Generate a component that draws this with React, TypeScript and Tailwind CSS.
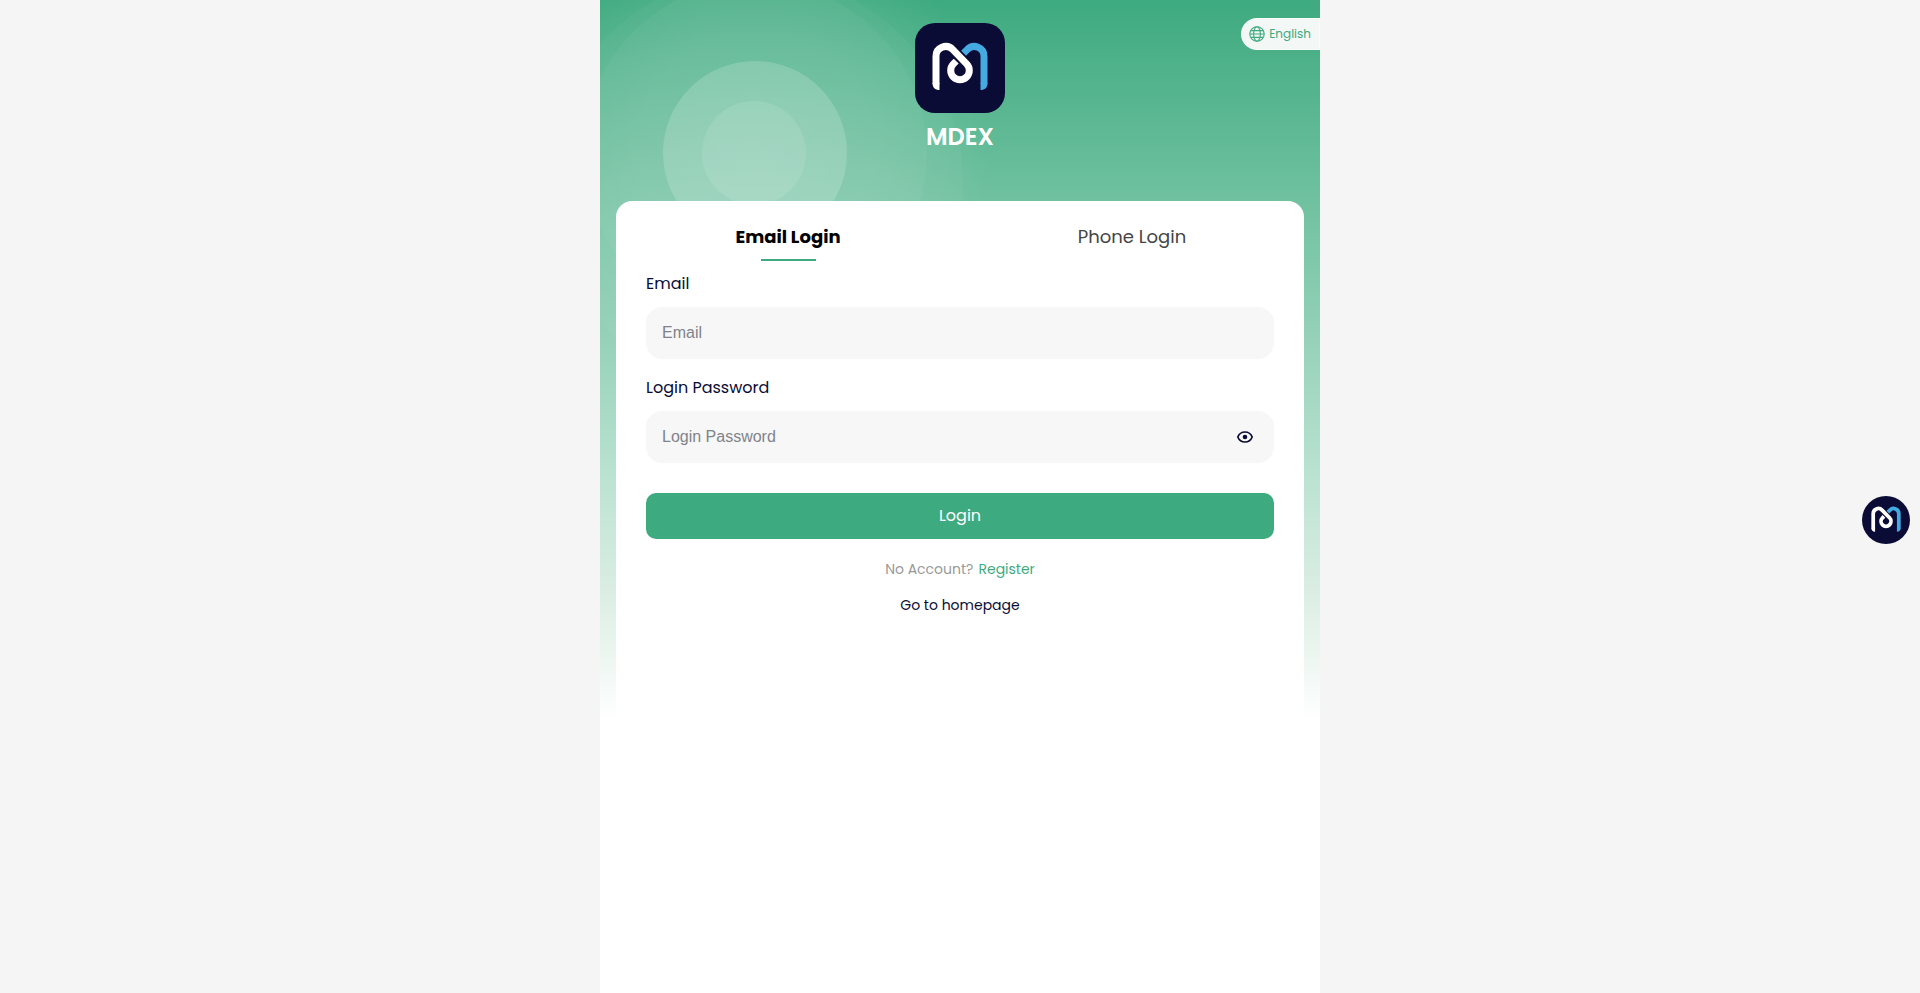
import { useState } from "react";

const tabs = [
  { id: "email", label: "Email Login", field: "Email" },
  { id: "phone", label: "Phone Login", field: "Phone" },
];

function Logo({ className }: { className: string }) {
  return (
    <svg viewBox="0 0 90 90" fill="none" className={className} aria-hidden="true">
      <rect width="90" height="90" fill="#0a0c35" />
      <path d="M48.6 30.2L52.4 26.4A9.7 9.7 0 0 1 69 33.3V61" stroke="#45a9e2" strokeWidth="7" />
      <path d="M65.5 60H72.5C72.5 64.5 70 67.1 65.5 67.1Z" fill="#45a9e2" />
      <path d="M38 26.9L50 38.9" stroke="#0a0c35" strokeWidth="8.6" />
      <path
        d="M21 61V33.3A9.7 9.7 0 0 1 37.6 26.4L51.6 40.9A9.3 9.3 0 1 1 38.4 40.9L41.2 38.1"
        stroke="#fff"
        strokeWidth="7"
      />
      <path d="M17.5 60H24.5V67.1C20 67.1 17.5 64.5 17.5 60Z" fill="#fff" />
    </svg>
  );
}

function GlobeIcon() {
  return (
    <svg width="16" height="16" viewBox="0 0 16 16" fill="none" stroke="currentColor" strokeWidth="1.1" aria-hidden="true">
      <circle cx="8" cy="8" r="7.2" />
      <ellipse cx="8" cy="8" rx="3.4" ry="7.2" />
      <path d="M.8 8H15.2M2 4.6H14M2 11.4H14" />
    </svg>
  );
}

function EyeIcon() {
  return (
    <svg width="18" height="18" viewBox="0 0 18 18" fill="none" aria-hidden="true">
      <path
        d="M1.8 9C3.2 5.6 5.8 4 9 4S14.8 5.6 16.2 9C14.8 12.4 12.2 14 9 14S3.2 12.4 1.8 9Z"
        stroke="currentColor"
        strokeWidth="1.7"
      />
      <circle cx="9" cy="9" r="2.3" fill="currentColor" />
    </svg>
  );
}

// Soft concentric rings behind the logo
function Rings() {
  return (
    <svg className="absolute inset-x-0 top-0 w-full h-[720px]" aria-hidden="true">
      <defs>
        <radialGradient id="glow">
          <stop offset="0" stopColor="#fff" stopOpacity="0.15" />
          <stop offset="0.5" stopColor="#fff" stopOpacity="0.12" />
          <stop offset="0.8" stopColor="#fff" stopOpacity="0.06" />
          <stop offset="1" stopColor="#fff" stopOpacity="0" />
        </radialGradient>
      </defs>
      <circle cx="155" cy="153" r="236" fill="url(#glow)" />
      <circle cx="155" cy="183" r="208" fill="#fff" fillOpacity="0.03" />
      <circle cx="155" cy="153" r="172" fill="#fff" fillOpacity="0.04" />
      <circle cx="155" cy="153" r="92" fill="#fff" fillOpacity="0.17" />
      <circle cx="154" cy="153" r="52" fill="#fff" fillOpacity="0.1" />
    </svg>
  );
}

export default function App() {
  const [tab, setTab] = useState("email");
  const [showPassword, setShowPassword] = useState(false);
  const active = tabs.find((t) => t.id === tab) ?? tabs[0];

  return (
    <div className="min-h-screen bg-[#f5f5f5] font-[Poppins,Inter,sans-serif] text-[#0a0c35]">
      <main className="relative flex flex-col w-full max-w-[720px] min-h-screen mx-auto overflow-hidden bg-white">
        <div className="absolute inset-x-0 top-0 h-[720px] bg-[linear-gradient(180deg,#3eaa7f_0%,#70c1a0_28%,#8bcdb2_42%,#bae2d2_66%,#dceee5_83%,#fff_100%)]">
          <Rings />
        </div>

        <button
          type="button"
          className="absolute right-0 top-[18px] flex items-center gap-1 h-8 pl-[7px] pr-2 rounded-l-full border border-white/60 bg-[#f3f7f5] text-xs text-[#3eaa7f]"
        >
          <GlobeIcon />
          English
        </button>

        <header className="relative self-center flex flex-col items-center pt-[23px]">
          <Logo className="w-[90px] h-[90px] rounded-[20px]" />
          <h1 className="mt-2 text-2xl leading-8 font-semibold text-white">MDEX</h1>
        </header>

        <section className="relative grow mx-4 mt-12 rounded-t-2xl bg-white">
          <div role="tablist" className="grid grid-cols-2 pt-5">
            {tabs.map((t) => (
              <button
                key={t.id}
                type="button"
                role="tab"
                aria-selected={t.id === tab}
                onClick={() => setTab(t.id)}
                className={`flex flex-col items-center gap-[6px] text-lg leading-8 ${
                  t.id === tab ? "font-bold text-black" : "text-[#444]"
                }`}
              >
                {t.label}
                <span className={`w-[55px] h-[2px] ${t.id === tab ? "bg-[#3eaa7f]" : ""}`} />
              </button>
            ))}
          </div>

          <form className="flex flex-col px-[30px] pt-[11px]" onSubmit={(e) => e.preventDefault()}>
            <label htmlFor="account" className="text-base">
              {active.field}
            </label>
            <input
              id="account"
              type="text"
              placeholder={active.field}
              className="mt-[11px] h-[52px] w-full px-4 rounded-2xl bg-[#f7f7f7] font-['Liberation_Sans',Arial,sans-serif] text-base outline-none placeholder:text-[#80838a]"
            />

            <label htmlFor="password" className="mt-[17px] text-base">
              Login Password
            </label>
            <div className="mt-[11px] flex items-center h-[52px] pr-5 rounded-2xl bg-[#f7f7f7]">
              <input
                id="password"
                type={showPassword ? "text" : "password"}
                placeholder="Login Password"
                className="grow min-w-0 h-full px-4 bg-transparent font-['Liberation_Sans',Arial,sans-serif] text-base outline-none placeholder:text-[#80838a]"
              />
              <button type="button" aria-label="Show password" onClick={() => setShowPassword(!showPassword)}>
                <EyeIcon />
              </button>
            </div>

            <button type="submit" className="mt-[30px] h-[46px] rounded-[10px] bg-[#3eaa7f] text-base text-white">
              Login
            </button>
          </form>

          <div className="flex flex-col items-center gap-4 pt-5 text-sm">
            <p className="flex gap-[5px] text-[#999]">
              No Account?
              <a href="#register" className="text-[#3eaa7f]">
                Register
              </a>
            </p>
            <a href="#home">Go to homepage</a>
          </div>
        </section>
      </main>

      <button type="button" aria-label="Support" className="fixed right-[10px] top-[496px] w-12 h-12">
        <Logo className="w-12 h-12 rounded-full" />
      </button>
    </div>
  );
}
